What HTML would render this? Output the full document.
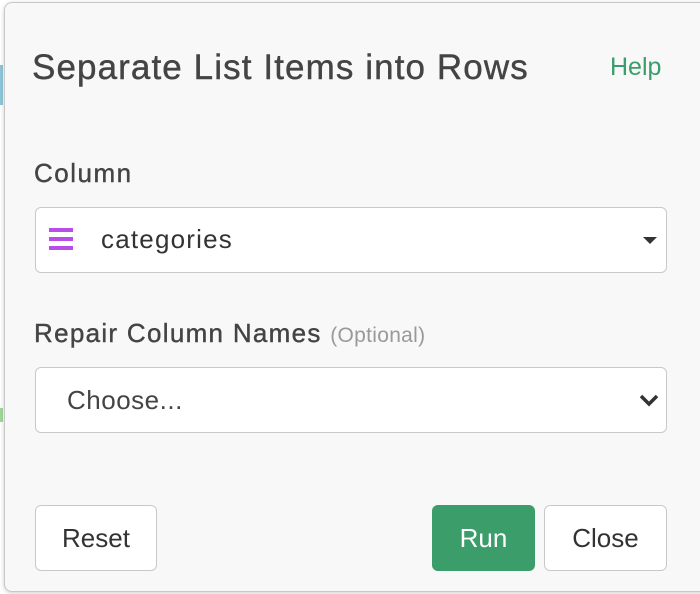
<!DOCTYPE html>
<html><head><style>
body{margin:0;width:700px;height:594px;background:#fff;position:relative;overflow:hidden;font-family:"Liberation Sans",sans-serif;color:#333}
.dlg{position:absolute;left:4px;top:2px;width:720px;height:588px;background:#f8f8f8;border:1px solid #c8c8c8;border-radius:8px;box-shadow:0 1px 4px rgba(0,0,0,.2)}
.a{position:absolute;white-space:nowrap}
.box{position:absolute;left:35px;width:630px;height:64px;background:#fff;border:1.5px solid #c9c9c9;border-radius:6px}
.btn{position:absolute;top:505px;height:64px;border:1.5px solid #c9c9c9;border-radius:6px;background:#fff;font-size:26px;line-height:64px;text-align:center;color:#333}
</style></head><body>
<div class="a" style="left:0;top:65px;width:3px;height:40px;background:#8cc6d8"></div>
<div class="a" style="left:0;top:408px;width:3px;height:14px;background:#9fd79b"></div>
<div class="dlg"></div>
<div class="a" style="left:32px;top:48px;font-size:35px;letter-spacing:1.1px;color:#444;-webkit-text-stroke:0.4px #444">Separate List Items into Rows</div>
<div class="a" style="left:610px;top:53px;font-size:25px;color:#3a9d6a">Help</div>
<div class="a" style="left:34px;top:158px;font-size:26px;letter-spacing:1.5px;color:#444;-webkit-text-stroke:0.4px #444">Column</div>
<div class="box" style="top:207px"></div>
<div class="a" style="left:49px;top:228px;width:24px;height:4px;background:#b84ee8;box-shadow:0 9px 0 #b84ee8,0 18px 0 #b84ee8"></div>
<div class="a" style="left:101px;top:224px;font-size:26px;letter-spacing:1.2px;color:#333">categories</div>
<div class="a" style="left:643px;top:237px;width:0;height:0;border-left:7px solid transparent;border-right:7px solid transparent;border-top:7px solid #333"></div>
<div class="a" style="left:34px;top:318px;font-size:26px;letter-spacing:1.3px;color:#444;-webkit-text-stroke:0.4px #444">Repair Column Names <span style="font-size:21px;letter-spacing:0.3px;color:#999;-webkit-text-stroke:0">(Optional)</span></div>
<div class="box" style="top:367px"></div>
<div class="a" style="left:67px;top:385px;font-size:26px;letter-spacing:0.5px;color:#444">Choose...</div>
<svg class="a" style="left:638px;top:392px" width="22" height="16"><path d="M3 4 L11 12 L19 4" fill="none" stroke="#333" stroke-width="3.5"/></svg>
<div class="btn" style="left:35px;width:120px">Reset</div>
<div class="btn" style="left:432px;width:101px;background:#3a9d6a;border-color:#3a9d6a;color:#fff">Run</div>
<div class="btn" style="left:544px;width:121px">Close</div>
</body></html>
